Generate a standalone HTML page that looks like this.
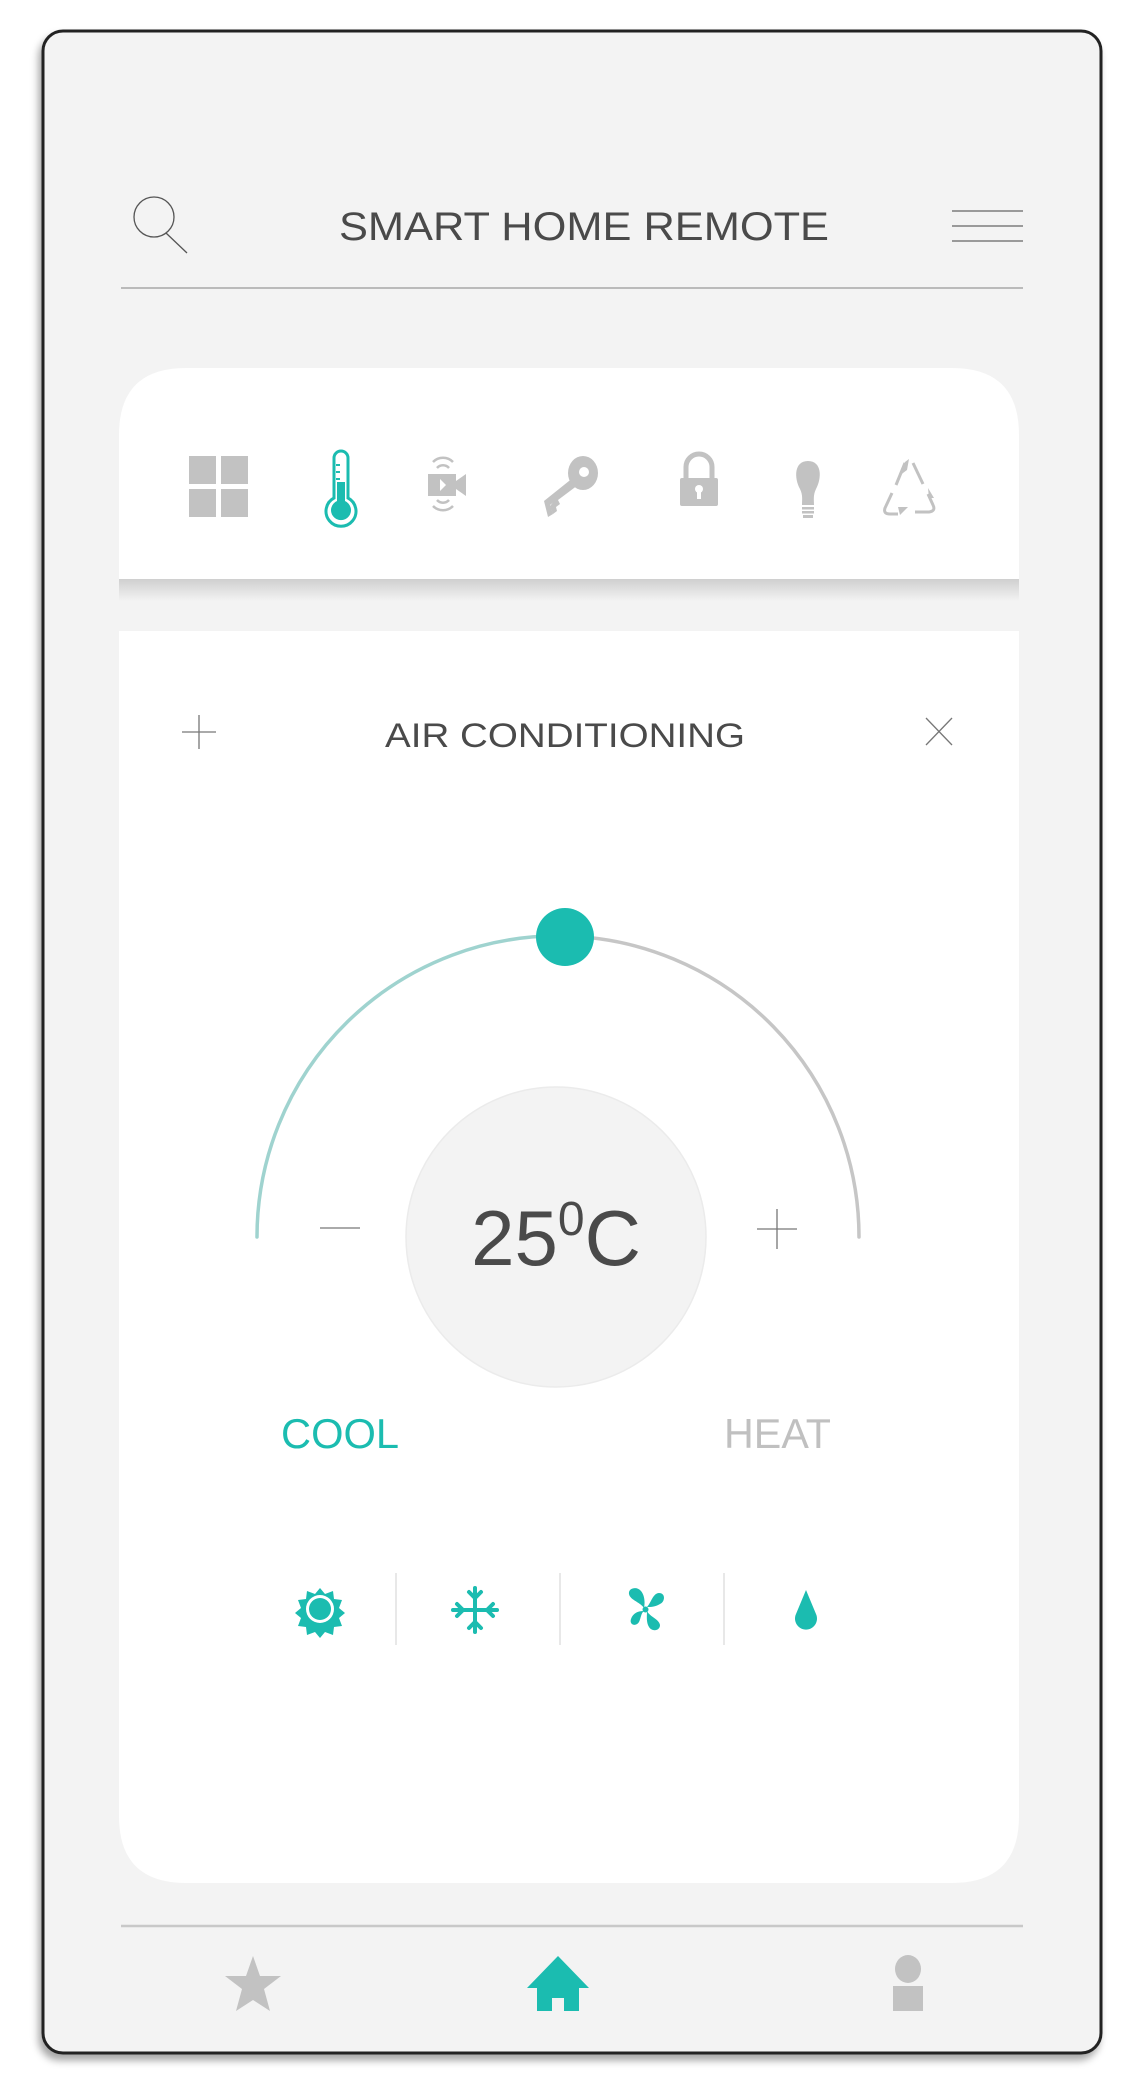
<!DOCTYPE html>
<html><head><meta charset="utf-8"><style>
html,body{margin:0;padding:0;background:#fff;}
svg{display:block;}
text{font-family:"Liberation Sans",sans-serif;}
</style></head><body>
<svg width="1136" height="2088" viewBox="0 0 1136 2088" xmlns="http://www.w3.org/2000/svg">
<defs>
<filter id="fs" x="-10%" y="-10%" width="120%" height="120%"><feDropShadow dx="-3" dy="6" stdDeviation="4" flood-color="#000" flood-opacity="0.35"/></filter>
<linearGradient id="sh" x1="0" y1="0" x2="0" y2="1"><stop offset="0" stop-color="#cfcfcf"/><stop offset="1" stop-color="#f3f3f3"/></linearGradient>
</defs>
<rect x="0" y="0" width="1136" height="2088" fill="#fff"/>
<rect x="43" y="31" width="1058" height="2022" rx="20" fill="#f3f3f3" stroke="#222" stroke-width="3" filter="url(#fs)"/>
<!-- header -->
<circle cx="154" cy="217" r="20" fill="none" stroke="#555" stroke-width="1.3"/>
<line x1="166" y1="233" x2="187" y2="253" stroke="#555" stroke-width="1.3"/>
<text x="584" y="240" font-size="40" fill="#4a4a4a" text-anchor="middle" textLength="490" lengthAdjust="spacingAndGlyphs">SMART HOME REMOTE</text>
<g stroke="#666" stroke-width="1.3"><line x1="952" y1="211" x2="1023" y2="211"/><line x1="952" y1="226" x2="1023" y2="226"/><line x1="952" y1="241" x2="1023" y2="241"/></g>
<line x1="121" y1="288" x2="1023" y2="288" stroke="#999" stroke-width="1.3"/>
<!-- top card -->
<rect x="119" y="579" width="900" height="22" fill="url(#sh)"/>
<path d="M119 579 V435 Q119 368 186 368 H952 Q1019 368 1019 435 V579 Z" fill="#fff"/>
<g transform="translate(0,-5)">
<g fill="#c2c2c2">
<rect x="189" y="461" width="27" height="28"/><rect x="221" y="461" width="27" height="28"/>
<rect x="189" y="494" width="27" height="28"/><rect x="221" y="494" width="27" height="28"/>
</g>
<g>
<path d="M334 463 a7 7 0 0 1 14 0 v40 a15 15 0 1 1 -14 0 z" fill="#fff" stroke="#1bbcb0" stroke-width="3"/>
<path d="M337 487 h8 v19 a10 10 0 1 1 -8 0 z" fill="#1bbcb0"/>
<rect x="336" y="469" width="4" height="2" fill="#1bbcb0"/><rect x="336" y="476" width="4" height="2" fill="#1bbcb0"/><rect x="336" y="483" width="4" height="2" fill="#1bbcb0"/>
</g>
<g fill="none" stroke="#c2c2c2" stroke-width="2.5">
<path d="M433 467 a14 14 0 0 1 20 0"/><path d="M437 473 a8 8 0 0 1 12 0"/>
<path d="M433 511 a14 14 0 0 0 20 0"/><path d="M437 505 a8 8 0 0 0 12 0"/>
</g>
<rect x="428" y="479" width="28" height="22" fill="#c2c2c2"/><path d="M456 486 l10 -7 v22 l-10 -7z" fill="#c2c2c2"/><path d="M440 484 l6 6 l-6 6z" fill="#fff"/>
<g fill="#c2c2c2">
<ellipse cx="583" cy="478" rx="15" ry="17"/>
<path d="M573 483 l5 7 l-20 15 l2 4 l-4 3 l1 4 l-4 3 l-3 -8 z"/>
<path d="M544 506 l5 -4 l25 -20 l4 6 l-28 22 l3 9 l-5 3z"/>
</g>
<circle cx="584" cy="477" r="5" fill="#fff"/>
<g><path d="M686 484 v-12 a13 13 0 0 1 26 0 v12" fill="none" stroke="#c2c2c2" stroke-width="5"/>
<rect x="680" y="483" width="38" height="28" rx="2" fill="#c2c2c2"/>
<circle cx="699" cy="494" r="4" fill="#fff"/><rect x="697" y="496" width="4" height="8" fill="#fff"/></g>
<g fill="#c2c2c2"><path d="M808 466 c-14 0 -14 17 -8 28 c3 6 2 11 2 16 h12 c0 -5 -1 -10 2 -16 c6 -11 6 -28 -8 -28z"/>
<rect x="802" y="512" width="12" height="2.5"/><rect x="802" y="516" width="12" height="2.5"/><rect x="803" y="520" width="10" height="3"/></g>
<g fill="none" stroke="#c2c2c2" stroke-width="3">
<path d="M905 468 l-9 22"/><path d="M913 468 l10 21"/><path d="M892 498 l-7 15 q-2 6 5 6 h8"/><path d="M928 499 l5 11 q3 6 -4 7 h-14"/>
</g>
<g fill="#c2c2c2"><path d="M909 464 l-4 3 l-6 14 l8 -6z"/><path d="M898 512 h10 l-8 8z"/><path d="M928 493 l6 10 h-5z"/></g>
</g>
<!-- main card -->
<path d="M119 631 H1019 V1816 Q1019 1883 952 1883 H186 Q119 1883 119 1816 Z" fill="#fff"/>
<g stroke="#777" stroke-width="1.3"><line x1="199" y1="715" x2="199" y2="749"/><line x1="182" y1="732" x2="216" y2="732"/>
<line x1="926" y1="718" x2="952" y2="745"/><line x1="952" y1="718" x2="926" y2="745"/></g>
<text x="565" y="747" font-size="34" fill="#4a4a4a" text-anchor="middle" textLength="360" lengthAdjust="spacingAndGlyphs">AIR CONDITIONING</text>
<!-- arc -->
<path d="M257 1237 A301 301 0 0 1 565 936" fill="none" stroke="#9fd3cf" stroke-width="3.5" stroke-linecap="round"/>
<path d="M565 936 A301 301 0 0 1 859 1237" fill="none" stroke="#c6c6c6" stroke-width="3.5" stroke-linecap="round"/>
<circle cx="565" cy="937" r="29" fill="#1bbcb0"/>
<circle cx="556" cy="1237" r="150" fill="#f3f3f3" stroke="#ebebeb" stroke-width="1.5"/>
<text x="556" y="1265" font-size="78" fill="#4a4a4a" text-anchor="middle">25<tspan font-size="48" dy="-30">0</tspan><tspan dy="30">C</tspan></text>
<line x1="320" y1="1228" x2="360" y2="1228" stroke="#777" stroke-width="1.3"/>
<g stroke="#777" stroke-width="1.3"><line x1="757" y1="1229" x2="797" y2="1229"/><line x1="777" y1="1209" x2="777" y2="1249"/></g>
<text x="281" y="1448" font-size="42" fill="#1bbcb0" textLength="118" lengthAdjust="spacingAndGlyphs">COOL</text>
<text x="724" y="1448" font-size="42" fill="#c0c0c0" textLength="107" lengthAdjust="spacingAndGlyphs">HEAT</text>
<!-- mode icons -->
<g stroke="#e0e0e0" stroke-width="1.5"><line x1="396" y1="1573" x2="396" y2="1645"/><line x1="560" y1="1573" x2="560" y2="1645"/><line x1="724" y1="1573" x2="724" y2="1645"/></g>
<g fill="#1bbcb0">
<path d="M320 1588 l5 6 8 -3 1 8 8 1 -3 8 6 5 -6 5 3 8 -8 1 -1 8 -8 -3 -5 6 -5 -6 -8 3 -1 -8 -8 -1 3 -8 -6 -5 6 -5 -3 -8 8 -1 1 -8 8 3z"/>
</g>
<circle cx="320" cy="1609" r="14" fill="#fff"/><circle cx="320" cy="1609" r="11" fill="#1bbcb0"/>
<g stroke="#1bbcb0" stroke-width="4" stroke-linecap="round" fill="none">
<line x1="475" y1="1588" x2="475" y2="1632"/><line x1="453" y1="1610" x2="497" y2="1610"/>
<path d="M469 1592 l6 6 l6 -6"/><path d="M469 1628 l6 -6 l6 6"/><path d="M457 1604 l6 6 l-6 6"/><path d="M493 1604 l-6 6 l6 6"/>
</g>
<g fill="#1bbcb0">
<path d="M644 1608 c-4 -6 -14 -8 -15 -14 c-1 -6 8 -8 12 -3 c4 5 4 12 3 17z"/>
<path d="M647 1607 c4 -4 6 -14 12 -14 c7 0 6 9 1 11 c-5 3 -9 3 -13 3z"/>
<path d="M647 1611 c3 6 12 8 13 14 c0 6 -8 7 -11 2 c-3 -5 -2 -11 -2 -16z"/>
<path d="M644 1611 c-6 0 -11 2 -13 8 c-2 6 5 8 8 3 c2 -4 2 -9 5 -11z"/>
<circle cx="645.5" cy="1609.5" r="3"/>
</g>
<path d="M806 1590 l-10 24 a11 11 0 1 0 20 0 z" fill="#1bbcb0"/>
<!-- bottom nav -->
<line x1="121" y1="1926" x2="1023" y2="1926" stroke="#c8c8c8" stroke-width="2.5"/>
<path d="M253 1956 l7 20 h21 l-17 13 l6 22 l-17 -11 l-17 11 l6 -22 l-17 -13 h21z" fill="#c2c2c2"/>
<path d="M558 1956 l-31 32 h10 v23 h15 v-13 h12 v13 h15 v-23 h10 z" fill="#1bbcb0"/>
<ellipse cx="908" cy="1969" rx="13" ry="14" fill="#c2c2c2"/>
<rect x="893" y="1986" width="30" height="25" fill="#c2c2c2"/>
</svg>
</body></html>
